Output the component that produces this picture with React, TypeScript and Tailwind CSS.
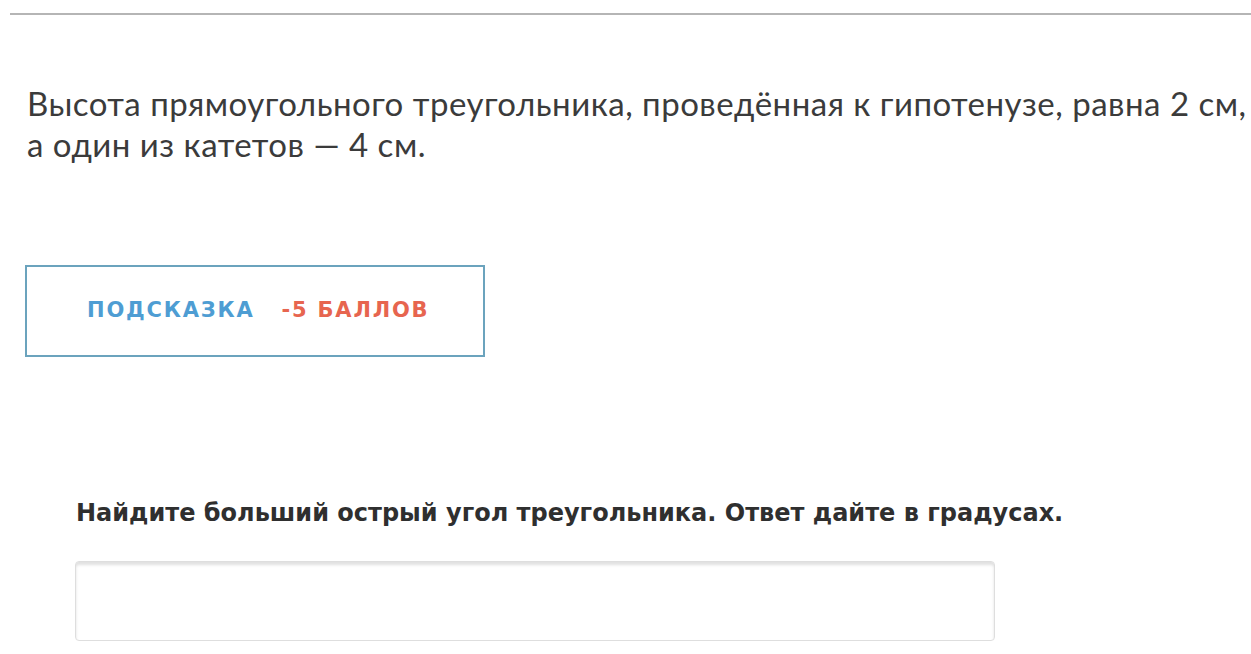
export default function App() {
  return (
    <div className="w-[1251px] h-[654px] overflow-hidden bg-white">
      <div className="pt-[13px] pl-[10px]">
        <div className="h-[2px] bg-[#b5b5b5]" />
      </div>
      <div
        className="ml-[27px] mt-[68px] text-[33px] leading-[41px] tracking-[0.5px] text-[#3b3b3b] whitespace-nowrap"
        style={{ fontFamily: "Lato, 'Open Sans', sans-serif" }}
      >
        <div>Высота прямоугольного треугольника, проведённая к гипотенузе, равна 2 см,</div>
        <div>а один из катетов — 4 см.</div>
      </div>
      <div className="ml-[25px] mt-[100px]" style={{ fontFamily: "'DejaVu Sans', sans-serif" }}>
        <div className="w-[460px] h-[92px] border-2 border-[#6ba3bd] flex items-center pl-[60px] gap-[27px] text-[21px] font-bold tracking-[1.8px]">
          <span className="text-[#4e9dd3]">ПОДСКАЗКА</span>
          <span className="text-[#e7654f]">-5 БАЛЛОВ</span>
        </div>
      </div>
      <div
        className="ml-[76px] mt-[142px] text-[24px] font-bold text-[#2f2f2f] leading-[28px] whitespace-nowrap"
        style={{ fontFamily: "'DejaVu Sans', sans-serif" }}
      >
        Найдите больший острый угол треугольника. Ответ дайте в градусах.
      </div>
      <div className="ml-[75px] mt-[34px]">
        <div className="w-[920px] h-[80px] rounded-[4px] border border-[#dedede] shadow-[inset_0_3px_3px_rgba(0,0,0,0.12)]" />
      </div>
    </div>
  );
}
